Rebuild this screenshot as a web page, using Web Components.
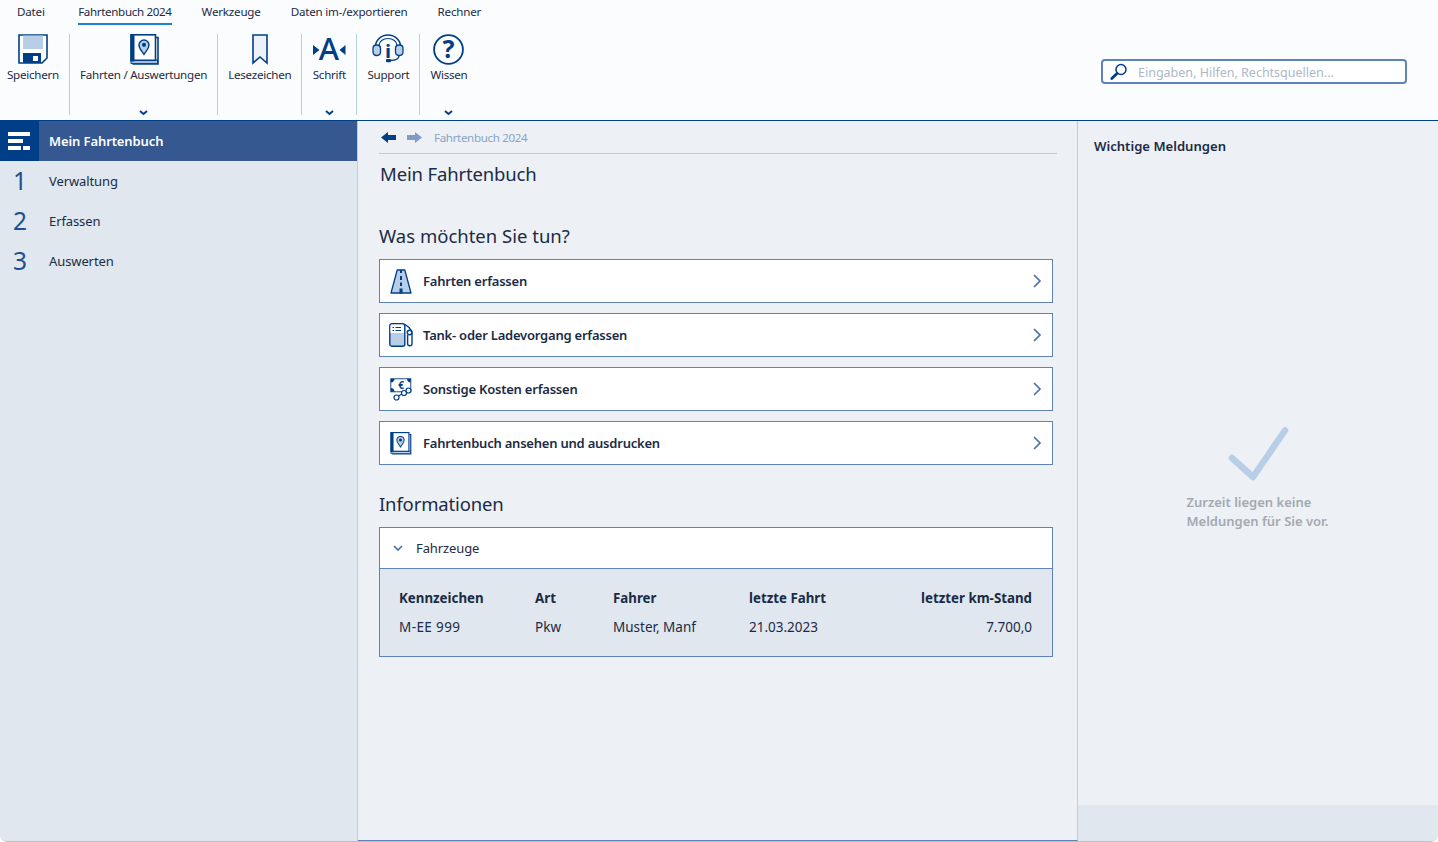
<!DOCTYPE html>
<html lang="de">
<head>
<meta charset="utf-8">
<title>Mein Fahrtenbuch</title>
<style>
    html, body { margin: 0; height: 100%; background: #ffffff; overflow: hidden; }
    body { font-family: "Noto Sans", "Open Sans", sans-serif; font-size: 11.6px; letter-spacing: -0.2px; color: #1c2b45; }
</style>
</head>
<body>
<app-frame>
    <ribbon-bar slot="top">
        <ribbon-group first label="Speichern"><app-icon name="save" w="30" h="30"></app-icon></ribbon-group>
        <ribbon-group label="Fahrten / Auswertungen" more><app-icon name="book" w="28" h="30"></app-icon></ribbon-group>
        <ribbon-group label="Lesezeichen"><app-icon name="bookmark" w="16" h="30"></app-icon></ribbon-group>
        <ribbon-group label="Schrift" more><app-icon name="font" w="34" h="30"></app-icon></ribbon-group>
        <ribbon-group label="Support"><app-icon name="support" w="32" h="30"></app-icon></ribbon-group>
        <ribbon-group label="Wissen" more><app-icon name="help" w="31" h="31"></app-icon></ribbon-group>
    </ribbon-bar>

    <side-nav slot="side">
        <nav-item num="1">Verwaltung</nav-item>
        <nav-item num="2">Erfassen</nav-item>
        <nav-item num="3">Auswerten</nav-item>
    </side-nav>

    <main-pane slot="main">
        <action-row icon="road" w="22" h="25">Fahrten erfassen</action-row>
        <action-row icon="pump" w="24" h="24">Tank- oder Ladevorgang erfassen</action-row>
        <action-row icon="money" w="22" h="23">Sonstige Kosten erfassen</action-row>
        <action-row icon="book" w="21" h="22">Fahrtenbuch ansehen und ausdrucken</action-row>
        <vehicle-panel slot="info"></vehicle-panel>
    </main-pane>

    <message-pane slot="aside"></message-pane>
</app-frame>

<script>
const NAVY = '#003f87';
const LIGHT = '#b8cde6';

const ICONS = {
    save: `<path d="M1 1H29V24L24 29H1Z" fill="#fff" stroke="${NAVY}" stroke-width="1.6"/>
           <rect x="5" y="1.5" width="20" height="13.5" fill="${LIGHT}"/>
           <rect x="5" y="19" width="18" height="10" fill="${NAVY}"/>
           <rect x="15" y="22" width="5" height="5" fill="#fff"/>`,
    book: `<path d="M26 3.5H28V30H2.5" fill="none" stroke="${NAVY}" stroke-width="1.6"/>
           <rect x="1" y="26" width="26.5" height="3.4" fill="${LIGHT}" stroke="${NAVY}" stroke-width="1"/>
           <rect x="1" y="0.8" width="24.5" height="25.5" fill="#fff" stroke="${NAVY}" stroke-width="1.6"/>
           <rect x="0.5" y="0.5" width="4" height="27" fill="${NAVY}"/>
           <path d="M14 20.5C11.5 16.5 9 14.5 9 11A5 5 0 0 1 19 11C19 14.5 16.5 16.5 14 20.5Z" fill="${LIGHT}" stroke="${NAVY}" stroke-width="1.4"/>
           <circle cx="14" cy="10.8" r="2.1" fill="${NAVY}"/>`,
    bookmark: `<path d="M1 1H15V29L8 23L1 29Z" fill="#edf2fa" stroke="${NAVY}" stroke-width="1.6"/>`,
    font: `<path d="M1 11L7.5 16L1 21Z" fill="${NAVY}"/><path d="M33.5 11L27.5 16L33.5 21Z" fill="${NAVY}"/>
           <text x="17" y="26" text-anchor="middle" font-family="Noto Sans" font-size="31" font-weight="500" letter-spacing="0" fill="${NAVY}">A</text>`,
    support: `<path d="M3.5 13V12.5A12.5 11.5 0 0 1 28.5 12.5V13" fill="none" stroke="${NAVY}" stroke-width="1.4"/>
              <path d="M7 11.5A9 7 0 0 1 25 11.5" fill="none" stroke="${NAVY}" stroke-width="1.1"/>
              <rect x="1" y="11" width="7.5" height="10.5" rx="3.4" fill="${LIGHT}" stroke="${NAVY}" stroke-width="1.3"/>
              <rect x="23.5" y="11" width="7.5" height="10.5" rx="3.4" fill="${LIGHT}" stroke="${NAVY}" stroke-width="1.3"/>
              <path d="M27 21.5C27 25 23.5 26.5 18 26.5" fill="none" stroke="${NAVY}" stroke-width="1.3"/>
              <rect x="14" y="25" width="5" height="3.2" rx="1" fill="${NAVY}"/>
              <text x="16" y="24" text-anchor="middle" font-family="Noto Sans" font-size="18" font-weight="800" letter-spacing="0" fill="${NAVY}">i</text>`,
    help: `<circle cx="15.5" cy="15.5" r="14.4" fill="#fff" stroke="${NAVY}" stroke-width="1.8"/>
           <text x="15.5" y="24" text-anchor="middle" font-family="Noto Sans" font-size="25" font-weight="700" letter-spacing="0" fill="${NAVY}">?</text>`,
    road: `<path d="M7.2 1H14.8L21 24H1Z" fill="${LIGHT}" stroke="${NAVY}" stroke-width="1.3" stroke-linejoin="round"/>
           <path d="M11 1V4M11 7V11M11 13.5V17" stroke="${NAVY}" stroke-width="2"/>
           <rect x="9.5" y="19.5" width="3" height="5" fill="${NAVY}"/>`,
    pump: `<g transform="translate(-1 0)">
           <rect x="0.8" y="0.8" width="15" height="22.4" rx="2" fill="${LIGHT}" stroke="${NAVY}" stroke-width="1.4"/>
           <path d="M1.5 10V3Q1.5 1.5 3 1.5H13.5Q15 1.5 15 3V10Z" fill="#fff"/>
           <path d="M3.5 4.5H5M3.5 7.5H5M6.5 4.5H12M6.5 7.5H12" stroke="${NAVY}" stroke-width="1.1"/>
           <path d="M16 1.5L20 4.5C22 7 23 8 23 10V20.5A2.2 2.2 0 0 1 18.6 20.5V12" fill="none" stroke="${NAVY}" stroke-width="1.4"/>
           <circle cx="20.6" cy="9.5" r="2.3" fill="#fff" stroke="${NAVY}" stroke-width="1.4"/></g>`,
    money: `<rect x="0.8" y="0.8" width="20" height="13" fill="#fff" stroke="${NAVY}" stroke-width="0.9"/>
            <path d="M0.8 4.5C3 4.5 4.5 3 4.5 0.8H0.8ZM20.8 4.5C18.6 4.5 17 3 17 0.8H20.8ZM0.8 10C3 10 4.5 11.6 4.5 13.8H0.8ZM20.8 10C18.6 10 17 11.6 17 13.8H20.8Z" fill="${NAVY}"/>
            <text x="11" y="11" text-anchor="middle" font-family="Noto Sans" font-size="10" font-weight="700" letter-spacing="0" fill="${NAVY}">€</text>
            <path d="M8.5 18L12 16M16 14L17 13.5" stroke="${NAVY}" stroke-width="1.1"/>
            <circle cx="6.5" cy="19.5" r="2.5" fill="#fff" stroke="${NAVY}" stroke-width="1.2"/>
            <circle cx="14" cy="15" r="2.5" fill="#fff" stroke="${NAVY}" stroke-width="1.2"/>
            <circle cx="18.5" cy="12.5" r="2.5" fill="#fff" stroke="${NAVY}" stroke-width="1.2"/>`,
    search: `<circle cx="11" cy="6.5" r="5" fill="none" stroke="${NAVY}" stroke-width="1.5"/>
             <path d="M7 10.5L1.8 15.5" stroke="${NAVY}" stroke-width="2.8" stroke-linecap="round"/>`,
    chevron: `<path d="M1 1L4.5 4L8 1" fill="none" stroke="${NAVY}" stroke-width="2"/>`,
    chevronRight: `<path d="M1 1L7 7L1 13" fill="none" stroke="#4a73ab" stroke-width="1.7"/>`,
    chevronSmall: `<path d="M1 1L5 5L9 1" fill="none" stroke="#4a73ab" stroke-width="1.7"/>`,
    back: `<path d="M0 5.5L7 0V3H15V8H7V11Z" fill="${NAVY}"/>`,
    forward: `<path d="M15 5.5L8 0V3H0V8H8V11Z" fill="#7f9dc4"/>`,
    menu: `<rect x="0" y="0" width="22" height="4" fill="#fff"/><rect x="0" y="7" width="15" height="4" fill="#fff"/>
           <rect x="0" y="14" width="13" height="4" fill="#fff"/><rect x="15" y="14" width="7" height="4" fill="#fff"/>`,
    check: `<path d="M4 31L25 50L57 3.5" fill="none" stroke="${LIGHT}" stroke-width="6.5" stroke-linecap="round" stroke-linejoin="round"/>`
};

class AppIcon extends HTMLElement {
    connectedCallback() {
        const w = this.getAttribute('w');
        const h = this.getAttribute('h');
        const root = this.shadowRoot || this.attachShadow({ mode: 'open' });
        root.innerHTML = `
            <style>
                :host { display: block; width: ${w}px; height: ${h}px; flex: none; }
                svg { display: block; overflow: visible; }
            </style>
            <svg width="${w}" height="${h}" viewBox="0 0 ${this.getAttribute('vw') || w} ${this.getAttribute('vh') || h}">${ICONS[this.getAttribute('name')]}</svg>`;
    }
}

class AppFrame extends HTMLElement {
    constructor() {
        super();
        this.attachShadow({ mode: 'open' }).innerHTML = `
            <style>
                :host {
                    display: grid;
                    grid-template-columns: 358px 720px 1fr;
                    grid-template-rows: 121px 1fr;
                    height: 842px;
                    box-sizing: border-box;
                    border-bottom: 1px solid #b9bfc6;
                    border-radius: 0 0 8px 8px;
                    overflow: hidden;
                    background: #edf0f5;
                }
                .top { grid-column: 1 / -1; }
                ::slotted(*) { min-width: 0; min-height: 0; }
            </style>
            <div class="top"><slot name="top"></slot></div>
            <slot name="side"></slot>
            <slot name="main"></slot>
            <slot name="aside"></slot>`;
    }
}

class RibbonBar extends HTMLElement {
    constructor() {
        super();
        this.attachShadow({ mode: 'open' }).innerHTML = `
            <style>
                :host {
                    display: block;
                    height: 121px;
                    box-sizing: border-box;
                    background: #fbfcfe;
                    border-bottom: 1px solid ${NAVY};
                }
                .tabs { display: flex; gap: 30px; height: 25px; padding-left: 17px; box-sizing: border-box; }
                .tab { height: 25px; box-sizing: border-box; padding-top: 3px; line-height: 17px; white-space: nowrap; }
                .tab.active { margin-left: 3.5px; border-bottom: 2px solid #1c82d6; letter-spacing: -0.35px; }
                .row { display: flex; height: 81px; margin-top: 9px; }
                .search {
                    margin: 25px 31px 0 auto;
                    width: 306px; height: 25px; box-sizing: border-box;
                    display: flex; align-items: center; gap: 10px;
                    padding-left: 7px;
                    background: #fff;
                    border: 2px solid #5f83b6;
                    border-radius: 4px;
                    color: #adb8c8;
                    font-size: 12.5px;
                    letter-spacing: 0;
                }
                .search span { padding-top: 1px; }
            </style>
            <div class="tabs">
                <span class="tab">Datei</span>
                <span class="tab active">Fahrtenbuch 2024</span>
                <span class="tab">Werkzeuge</span>
                <span class="tab">Daten im-/exportieren</span>
                <span class="tab">Rechner</span>
            </div>
            <div class="row">
                <slot></slot>
                <div class="search">
                    <app-icon name="search" w="18" h="17"></app-icon>
                    <span>Eingaben, Hilfen, Rechtsquellen...</span>
                </div>
            </div>`;
    }
}

class RibbonGroup extends HTMLElement {
    constructor() {
        super();
        this.attachShadow({ mode: 'open' }).innerHTML = `
            <style>
                :host {
                    display: flex;
                    flex-direction: column;
                    align-items: center;
                    height: 81px;
                    box-sizing: border-box;
                    padding: 0 10px;
                    border-left: 1px solid ${LIGHT};
                }
                :host([first]) { border-left: 0; padding-left: 7px; }
                .label { margin-top: 2px; line-height: 18px; white-space: nowrap; letter-spacing: -0.25px; }
                .more { margin-top: auto; height: 5px; }
            </style>
            <slot></slot>
            <div class="label"></div>`;
    }
    connectedCallback() {
        const root = this.shadowRoot;
        root.querySelector('.label').textContent = this.getAttribute('label');
        this.querySelector('app-icon[name="help"]')?.style.setProperty('margin-bottom', '-1px');
        if (this.hasAttribute('more') && !root.querySelector('.more')) {
            const more = document.createElement('app-icon');
            more.className = 'more';
            more.setAttribute('name', 'chevron');
            more.setAttribute('w', '9');
            more.setAttribute('h', '5');
            root.appendChild(more);
        }
    }
}

class SideNav extends HTMLElement {
    constructor() {
        super();
        this.attachShadow({ mode: 'open' }).innerHTML = `
            <style>
                :host { display: block; background: #e0e7ef; border-right: 1px solid ${LIGHT}; }
                .head { display: flex; height: 40px; background: #34588f; color: #fff; font-size: 13px; letter-spacing: -0.1px; font-weight: 600; }
                .burger { width: 39px; box-sizing: border-box; padding-left: 8px; background: ${NAVY}; display: flex; align-items: center; }
                .title { padding-left: 10px; line-height: 40px; }
            </style>
            <div class="head">
                <div class="burger"><app-icon name="menu" w="22" h="18"></app-icon></div>
                <div class="title">Mein Fahrtenbuch</div>
            </div>
            <slot></slot>`;
    }
}

class NavItem extends HTMLElement {
    constructor() {
        super();
        this.attachShadow({ mode: 'open' }).innerHTML = `
            <style>
                :host { display: flex; align-items: center; height: 40px; font-size: 13px; letter-spacing: -0.1px; }
                .num { width: 49px; box-sizing: border-box; padding-left: 13px; font-size: 24.5px; line-height: 40px; color: #1f4f8f; }
            </style>
            <div class="num"></div>
            <slot></slot>`;
    }
    connectedCallback() {
        this.shadowRoot.querySelector('.num').textContent = this.getAttribute('num');
    }
}

class MainPane extends HTMLElement {
    constructor() {
        super();
        this.attachShadow({ mode: 'open' }).innerHTML = `
            <style>
                :host {
                    display: block;
                    box-sizing: border-box;
                    padding: 0 20px 0 21px;
                    background: #edf0f5;
                    border-right: 1px solid ${LIGHT};
                    border-bottom: 1px solid #5f83b6;
                }
                .crumb {
                    display: flex; align-items: center;
                    height: 33px; box-sizing: border-box;
                    padding-left: 2px;
                    border-bottom: 1px solid ${LIGHT};
                    color: #8aa3c4;
                    letter-spacing: -0.35px;
                }
                .crumb span { margin-left: 12px; }
                .crumb app-icon + app-icon { margin-left: 11px; }
                h1, h2 { margin: 0; font-weight: 400; font-size: 18.5px; line-height: 26px; color: #1c2b45; letter-spacing: -0.15px; }
                h1 { margin-top: 7px; padding-left: 1px; }
                h2.todo { margin-top: 36px; letter-spacing: 0; }
                h2.info { margin-top: 26px; }
                .rows { display: flex; flex-direction: column; gap: 10px; margin-top: 10px; width: 674px; }
                .info-slot { display: block; width: 674px; margin-top: 10px; }
            </style>
            <div class="crumb">
                <app-icon name="back" w="15" h="11"></app-icon>
                <app-icon name="forward" w="15" h="11"></app-icon>
                <span>Fahrtenbuch 2024</span>
            </div>
            <h1>Mein Fahrtenbuch</h1>
            <h2 class="todo">Was möchten Sie tun?</h2>
            <div class="rows"><slot></slot></div>
            <h2 class="info">Informationen</h2>
            <div class="info-slot"><slot name="info"></slot></div>`;
    }
}

class ActionRow extends HTMLElement {
    constructor() {
        super();
        this.attachShadow({ mode: 'open' }).innerHTML = `
            <style>
                :host {
                    display: flex; align-items: center;
                    height: 44px; box-sizing: border-box;
                    background: #fff;
                    border: 1px solid #5f83b6;
                    font-size: 13px; font-weight: 600; letter-spacing: -0.22px;
                }
                .ic { width: 43px; display: flex; justify-content: flex-start; padding-left: 10px; box-sizing: border-box; }
                .chev { margin-left: auto; margin-right: 11px; }
            </style>
            <div class="ic"></div>
            <slot></slot>
            <app-icon class="chev" name="chevronRight" w="8" h="14"></app-icon>`;
    }
    connectedCallback() {
        const ic = this.shadowRoot.querySelector('.ic');
        if (ic.firstChild) return;
        const icon = document.createElement('app-icon');
        const name = this.getAttribute('icon');
        icon.setAttribute('name', name);
        icon.setAttribute('w', this.getAttribute('w'));
        icon.setAttribute('h', this.getAttribute('h'));
        if (name === 'book') {
            icon.setAttribute('vw', '28');
            icon.setAttribute('vh', '30');
        }
        ic.appendChild(icon);
    }
}

class VehiclePanel extends HTMLElement {
    constructor() {
        super();
        this.attachShadow({ mode: 'open' }).innerHTML = `
            <style>
                :host { display: block; border: 1px solid #5f83b6; font-size: 13.5px; letter-spacing: 0; }
                .head {
                    display: flex; align-items: center; gap: 13px;
                    height: 40px; padding-left: 13px;
                    background: #fff;
                    border-bottom: 1px solid #5f83b6;
                    font-size: 13px; letter-spacing: -0.1px;
                }
                .body { background: #e0e7ef; padding: 14px 20px 15px 19px; }
                table { width: 100%; border-collapse: collapse; table-layout: fixed; }
                th, td { padding: 0; text-align: left; font-weight: 400; height: 29px; white-space: nowrap; }
                th { font-weight: 700; font-size: 13.3px; }
                td.plate { letter-spacing: 0.4px; }
                .r { text-align: right; }
            </style>
            <div class="head">
                <app-icon name="chevronSmall" w="10" h="6"></app-icon>
                <span>Fahrzeuge</span>
            </div>
            <div class="body">
                <table>
                    <colgroup><col style="width:136px"><col style="width:78px"><col style="width:136px"><col style="width:120px"><col></colgroup>
                    <tr><th>Kennzeichen</th><th>Art</th><th>Fahrer</th><th>letzte Fahrt</th><th class="r">letzter km-Stand</th></tr>
                    <tr><td class="plate">M-EE 999</td><td>Pkw</td><td>Muster, Manf</td><td>21.03.2023</td><td class="r">7.700,0</td></tr>
                </table>
            </div>`;
    }
}

class MessagePane extends HTMLElement {
    constructor() {
        super();
        this.attachShadow({ mode: 'open' }).innerHTML = `
            <style>
                :host { display: flex; flex-direction: column; background: #edf0f5; }
                .title { padding: 15px 0 0 16px; font-size: 13.1px; letter-spacing: 0; font-weight: 600; line-height: 20px; }
                .empty { flex: 1; display: flex; flex-direction: column; align-items: center; padding-top: 271px; box-sizing: border-box; }
                .txt { margin: 12px 0 0 3px; width: 146px; font-size: 13px; letter-spacing: 0; font-weight: 600; line-height: 19px; color: #a3a9b1; }
                .foot { height: 36px; background: #e0e7ef; }
            </style>
            <div class="title">Wichtige Meldungen</div>
            <div class="empty">
                <app-icon name="check" w="60" h="54"></app-icon>
                <p class="txt">Zurzeit liegen keine Meldungen für Sie vor.</p>
            </div>
            <div class="foot"></div>`;
    }
}

customElements.define('app-icon', AppIcon);
customElements.define('app-frame', AppFrame);
customElements.define('ribbon-bar', RibbonBar);
customElements.define('ribbon-group', RibbonGroup);
customElements.define('side-nav', SideNav);
customElements.define('nav-item', NavItem);
customElements.define('main-pane', MainPane);
customElements.define('action-row', ActionRow);
customElements.define('vehicle-panel', VehiclePanel);
customElements.define('message-pane', MessagePane);
</script>
</body>
</html>
